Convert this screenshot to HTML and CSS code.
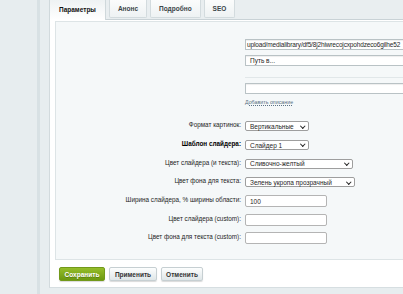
FILE: index.html
```html
<!DOCTYPE html>
<html lang="ru">
<head>
  <meta charset="UTF-8">
  <title>Параметры слайдера</title>
  <link rel="stylesheet" href="styles.css">
</head>
<body>
  <div class="layout">
    <!-- Левая полоса меню -->
    <div class="side"></div>

    <div class="main">
      <!-- Вкладки -->
      <div class="tabs">
        <div class="tab tab-active">Параметры</div>
        <div class="tab">Анонс</div>
        <div class="tab">Подробно</div>
        <div class="tab">SEO</div>
      </div>

      <div class="frame">
        <div class="panel">
          <!-- Картинка -->
          <div class="file-block">
            <div class="field field-path"><span class="path-text">upload/medialibrary/df5/8j2hiwrecojcxpohdzeco6gilhe52</span></div>
            <div class="field">Путь в...</div>
            <div class="sep"></div>
            <div class="field"></div>
            <a class="add-desc" href="#">Добавить описание</a>
          </div>

          <!-- Настройки слайдера -->
          <div class="form-grid">
            <div class="label">Формат картинок:</div>
            <div><div class="select w-short">Вертикальные<span class="chev"></span></div></div>

            <div class="label label-bold">Шаблон слайдера:</div>
            <div><div class="select w-short">Слайдер 1<span class="chev"></span></div></div>

            <div class="label">Цвет слайдера (и текста):</div>
            <div><div class="select w-cream">Сливочно-желтый<span class="chev"></span></div></div>

            <div class="label">Цвет фона для текста:</div>
            <div><div class="select w-green">Зелень укропа прозрачный<span class="chev"></span></div></div>

            <div class="label">Ширина слайдера, % ширины области:</div>
            <div><div class="input">100</div></div>

            <div class="label">Цвет слайдера (custom):</div>
            <div><div class="input"></div></div>

            <div class="label">Цвет фона для текста (custom):</div>
            <div><div class="input"></div></div>
          </div>
        </div>

        <!-- Кнопки -->
        <div class="buttons">
          <button class="btn btn-save">Сохранить</button>
          <button class="btn">Применить</button>
          <button class="btn">Отменить</button>
        </div>
      </div>
    </div>
  </div>
</body>
</html>
```

FILE: styles.css
```css
/* Общие стили */
body {
  margin: 0;
  height: 294px;
  overflow: hidden;
  background: #e7edef;
  font-family: 'Liberation Sans', Arial, sans-serif;
  font-size: 6.5px;
  color: #1e1e1e;
}

.layout {
  display: flex;
  height: 100%;
}

.side {
  flex: none;
  width: 37px;
  border-right: 3px solid #d8e1e4;
}

.main {
  flex: none;
  width: 354px;
  margin-left: 9px;
}

/* Вкладки */
.tabs {
  display: flex;
  align-items: flex-start;
  gap: 3px;
  height: 19px;
  border-bottom: 1px solid #c9d2d6;
  background: #e9eef0;
}

.tab {
  box-sizing: border-box;
  height: 18px;
  padding: 0 8px;
  display: flex;
  align-items: center;
  font-weight: 700;
  color: #3a4548;
  background: linear-gradient(#fbfcfc, #eef2f3);
  border: 1px solid #d3dbde;
  border-top: none;
  border-radius: 0 0 2px 2px;
}

.tab-active {
  height: 20px;
  padding: 0 9px 1px;
  color: #111;
  background: linear-gradient(#eef2f3, #ffffff);
  border-color: #cfd8db;
  border-bottom: none;
  border-radius: 0;
  position: relative;
  z-index: 1;
}

/* Белая рамка и панель */
.frame {
  background: #fff;
  border-left: 1px solid #d2dadd;
  border-bottom: 1px solid #d6dee1;
  padding: 1px 0 0 5px;
}

.panel {
  box-sizing: border-box;
  height: 239px;
  background: #f5f8f9;
  border: 1px solid #dde4e6;
  border-right: none;
}

.file-block {
  margin: 17px 0 0 189px;
  display: flex;
  flex-direction: column;
  align-items: stretch;
}

.field {
  box-sizing: border-box;
  height: 11px;
  padding: 0 4px;
  display: flex;
  align-items: center;
  background: #fff;
  border: 1px solid #b9c2c5;
  border-right: none;
  border-radius: 1px 0 0 1px;
  box-shadow: inset 0 1px 1px rgba(0, 0, 0, 0.07);
  white-space: nowrap;
  overflow: hidden;
  margin-bottom: 5px;
}

.field-path {
  padding-left: 1px;
}

.path-text {
  letter-spacing: -0.15px;
}

.sep {
  height: 1px;
  background: #e1e7e9;
  margin: 6px 0 5px;
}

.add-desc {
  align-self: flex-start;
  font-size: 5.3px;
  color: #5a7184;
  text-decoration: underline dotted;
}

/* Сетка полей */
.form-grid {
  display: grid;
  grid-template-columns: 185px 1fr;
  grid-auto-rows: 18.7px;
  column-gap: 4px;
  align-items: center;
  margin-top: 12px;
}

.label {
  font-size: 6.35px;
  text-align: right;
  padding-bottom: 3px;
  white-space: nowrap;
}

.label-bold {
  font-weight: 700;
  color: #000;
}

.select {
  box-sizing: border-box;
  height: 10px;
  padding: 0 4px;
  display: flex;
  align-items: center;
  justify-content: space-between;
  background: #fff;
  border: 1px solid #9e9e9e;
  border-radius: 2px;
  white-space: nowrap;
}

.w-short { width: 64px; }
.w-cream { width: 108px; }
.w-green { width: 110px; }

.chev {
  width: 2.5px;
  height: 2.5px;
  border-right: 1.3px solid #222;
  border-bottom: 1.3px solid #222;
  transform: translateY(-1px) rotate(45deg);
}

.input {
  box-sizing: border-box;
  width: 82px;
  height: 12px;
  padding: 0 4px;
  display: flex;
  align-items: center;
  background: #fff;
  border: 1px solid #b4b4b4;
  border-radius: 2px;
}

/* Кнопки */
.buttons {
  display: flex;
  gap: 4px;
  padding: 7px 0 6px 4px;
}

.btn {
  box-sizing: border-box;
  height: 14px;
  padding: 0;
  font-family: inherit;
  font-size: 6.5px;
  font-weight: 700;
  color: #333;
  background: linear-gradient(#fdfefe, #dfe6e8);
  border: 1px solid #c6cfd2;
  border-radius: 2px;
  box-shadow: 0 1px 1px rgba(0, 0, 0, 0.15);
  width: 48px;
}

.btn-save {
  width: 46px;
  color: #fff;
  background: linear-gradient(#95bd2a, #6b9810);
  border-color: #72991a;
  text-shadow: 0 1px 0 rgba(0, 0, 0, 0.25);
}

.btn:last-child {
  width: 42px;
}
```
